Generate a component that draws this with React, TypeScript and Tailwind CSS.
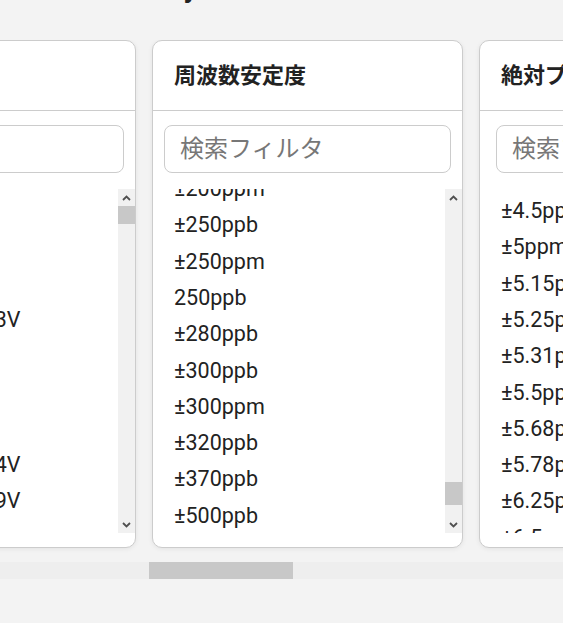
import React from "react";

const font = { fontFamily: 'Roboto, "Noto Sans CJK JP", sans-serif' };

interface CardProps {
  title: string;
  items: string[];
  offset: string; // class for list scroll offset
  inputInset: string;
  thumb?: "top" | "bottom" | null;
}

const ScrollBar: React.FC<{ thumb: "top" | "bottom" }> = ({ thumb }) => (
  <div className="flex w-[17px] shrink-0 flex-col bg-[#f1f1f1]">
    <div className="flex h-[17px] items-center justify-center">
      <svg width="9" height="6" viewBox="0 0 9 6">
        <path d="M1 5 L4.5 1.5 L8 5" fill="none" stroke="#505050" strokeWidth="1.8" />
      </svg>
    </div>
    <div className="flex flex-1 flex-col">
      {thumb === "top" ? (
        <div className="h-[18px] bg-[#c8c8c8]" />
      ) : (
        <>
          <div className="flex-1" />
          <div className="mb-[11px] h-[23px] bg-[#c8c8c8]" />
        </>
      )}
    </div>
    <div className="flex h-[17px] items-center justify-center">
      <svg width="9" height="6" viewBox="0 0 9 6">
        <path d="M1 1 L4.5 4.5 L8 1" fill="none" stroke="#505050" strokeWidth="1.8" />
      </svg>
    </div>
  </div>
);

const Card: React.FC<CardProps> = ({ title, items, offset, inputInset, thumb }) => (
  <div className="flex h-[508px] w-[311px] shrink-0 flex-col rounded-[10px] border border-[#cccccc] bg-white shadow-[0_1px_5px_rgba(0,0,0,0.07)]">
    <div className="flex h-[70px] items-center border-b border-[#cccccc] px-[21px]">
      <h2 className="whitespace-nowrap text-[22px] font-bold text-[#222222]">{title}</h2>
    </div>
    <div className={`pt-[14px] ${inputInset}`}>
      <div className="flex h-[48px] items-center rounded-[8px] border border-[#cccccc] px-[15px]">
        <span className="whitespace-nowrap text-[24px] text-[#777777]">検索フィルタ</span>
      </div>
    </div>
    <div className="mt-[16px] flex h-[344px]">
      <div className="flex-1 overflow-hidden pl-[21px]">
        <ul className={offset}>
          {items.map((it, i) => (
            <li
              key={i}
              className="flex h-[36.3px] items-center whitespace-nowrap text-[21.5px] text-[#222222]"
            >
              {it}
            </li>
          ))}
        </ul>
      </div>
      {thumb && <ScrollBar thumb={thumb} />}
    </div>
  </div>
);

const voltages = [
  "1.5V",
  "1.8V",
  "2.5V",
  "+1.71V\u2002～ +3.63V",
  "2.8V",
  "3.0V",
  "3.3V",
  "+2.25V\u2002～ +3.64V",
  "+1.60V\u2002～ +3.69V",
  "5.0V",
];

const stability = [
  "±200ppm",
  "±250ppb",
  "±250ppm",
  "250ppb",
  "±280ppb",
  "±300ppb",
  "±300ppm",
  "±320ppb",
  "±370ppb",
  "±500ppb",
  "±500ppm",
];

const pull = [
  "±4.5ppm",
  "±5ppm",
  "±5.15ppm",
  "±5.25ppm",
  "±5.31ppm",
  "±5.5ppm",
  "±5.68ppm",
  "±5.78ppm",
  "±6.25ppm",
  "±6.5ppm",
];

export default function App() {
  return (
    <div className="h-[623px] w-[563px] overflow-hidden bg-[#f3f3f3]" style={font}>
      <div className="-mt-[30px]">
        <h1 className="mb-[34px] pl-[96px] text-[28px] font-bold leading-[36px] text-[#222222]">
          Filter by
        </h1>
        <div className="overflow-hidden pb-[14px]">
          <div className="-ml-[175px] flex gap-4">
            <Card title="電源電圧" items={voltages} offset="pt-[4px]" inputInset="px-[11px]" thumb="top" />
            <Card title="周波数安定度" items={stability} offset="-mt-[18px]" inputInset="px-[11px]" thumb="bottom" />
            <Card title="絶対プル範囲" items={pull} offset="pt-[4px]" inputInset="px-[16px]" thumb={null} />
          </div>
        </div>
        <div className="flex h-[17px] bg-[#eeeeee]">
          <div className="ml-[149px] w-[144px] bg-[#c8c8c8]" />
        </div>
      </div>
    </div>
  );
}
